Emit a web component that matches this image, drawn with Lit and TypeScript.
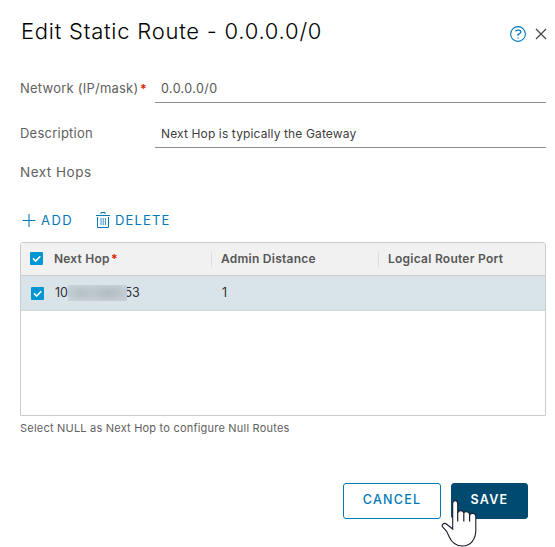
import { LitElement, html, css, svg } from "lit";
import { customElement } from "lit/decorators.js";

const tick = html`<svg class="tick" viewBox="0 0 13 13"><path d="M3 6.4 5.6 9 10.3 4.3" /></svg>`;

@customElement("app-root")
export class AppRoot extends LitElement {
  static styles = css`
    :host { display: block; position: relative; width: 555px; height: 547px; overflow: hidden; background: #fff; color: #616161; font: 13px/20px Inter, "Liberation Sans", sans-serif; white-space: nowrap; }
    svg { display: block; fill: none; flex: none; }
    .dialog { box-sizing: border-box; padding: 17px 9px 0 20px; }
    header { display: flex; align-items: center; height: 30px; color: #000; }
    h1 { margin: 0; flex: 1; font-size: 22px; line-height: 28px; padding: 0 0 2px 1px; font-weight: 350; letter-spacing: 0.76px; }
    .tools { display: flex; align-items: center; gap: 9px; padding-top: 3px; margin-right: -1px; }
    .help { stroke: #0079b8; }
    .close { stroke: #444; }
    .field { display: flex; height: 30px; }
    .net { margin-top: 26px; }
    .desc { margin-top: 15px; }
    .label { width: 135px; line-height: 31px; letter-spacing: 0.23px; }
    .star { color: #e12200; font-weight: 700; font-size: 12px; margin-left: 1.5px; }
    .input { flex: 1; box-sizing: border-box; border-bottom: 1px solid #8c8c8c; padding-left: 6px; line-height: 31px; font-size: 12px; letter-spacing: 0.13px; color: #404040; }
    .net .input { color: #565656; font-size: 12.5px; letter-spacing: 0.4px; }
    .section { margin-top: 14px; font-size: 13.5px; letter-spacing: 0.5px; }
    .actions { display: flex; height: 20px; margin-top: 28px; padding-left: 2px; color: #0079b8; letter-spacing: 1.15px; }
    .action { display: flex; align-items: center; }
    .add { width: 74px; gap: 5px; }
    .add span { letter-spacing: 1.5px; }
    .delete { gap: 5px; }
    .action svg { stroke: #0079b8; }
    .grid { box-sizing: border-box; height: 174px; margin-top: 12px; border: 1px solid #ccc; border-radius: 3px 3px 0 0; overflow: hidden; }
    .row { display: flex; align-items: center; height: 34px; background: #d9e4ea; border-bottom: 1px solid #cfd8dd; font-size: 12.5px; color: #313131; }
    .head { height: 32px; background: #f1f1f1; border-bottom: 1px solid #ccc; font-size: 12px; font-weight: 600; color: #565656; letter-spacing: 0.25px; }
    .c1, .c2, .c3 { display: flex; align-items: center; box-sizing: border-box; }
    .c1 { width: 190px; padding-left: 9px; }
    .c2 { width: 167px; padding-left: 9px; }
    .c3 { flex: 1; padding-left: 9px; }
    .head .c1 { letter-spacing: 0.2px; }
    .head .c2, .head .c3 { height: 15px; border-left: 1px solid #ddd; }
    .row:not(.head) .c1 { padding-left: 10px; }
    .row:not(.head) .c2 { padding-left: 11px; }
    .tick { width: 13px; height: 13px; background: #0095d3; border-radius: 1px; stroke: #fff; stroke-width: 1.6; margin: 0 11px 1px 0; }
    .row:not(.head) .tick { margin: 0 11px 0 0; }
    .mask { width: 59px; height: 16px; background: radial-gradient(ellipse 16px 9px at 13px 8px, #b5c0c7, transparent), radial-gradient(ellipse 26px 10px at 40px 8px, #b0bbc2, transparent), #c8d1d7; margin: 0 -3px 0 0.5px; z-index: 1; }
    .note { margin-top: 2px; font-size: 11px; letter-spacing: 0.21px; }
    .footer { display: flex; gap: 10px; margin: 45px 0 0 323px; }
    .btn { box-sizing: border-box; width: 98px; height: 36px; border: 1px solid #0079b8; border-radius: 3px; color: #0079b8; font: 550 12.5px/32px Inter, sans-serif; letter-spacing: 1.25px; text-align: center; padding: 0 0 2px; background: #fff; }
    .save { width: 77px; background: #004a70; border-color: #004a70; color: #fff; font-weight: 600; }
    .cursor { position: absolute; left: 441px; top: 499px; }
  `;

  render() {
    return html`
      <div class="dialog">
        <header>
          <h1>Edit Static Route - 0.0.0.0/0</h1>
          <div class="tools">
            <svg class="help" width="16" height="16" viewBox="0 0 16 16"><circle cx="8" cy="8" r="7.4" stroke-width="1.1" /><path d="M5.3 5.2Q6.5 4.2 8.3 4.2 10.7 4.2 10.7 6 10.7 7.6 8 8.3V9.9M8 11.4V12.6" stroke-width="1.2" /></svg>
            <svg class="close" width="12" height="12" viewBox="0 0 12 12"><path d="M1 1 11 11M11 1 1 11" stroke-width="1.2" /></svg>
          </div>
        </header>
        <div class="field net"><span class="label">Network (IP/mask)<span class="star">*</span></span><div class="input">0.0.0.0/0</div></div>
        <div class="field desc"><span class="label">Description</span><div class="input">Next Hop is typically the Gateway</div></div>
        <div class="section">Next Hops</div>
        <div class="actions">
          <div class="action add"><svg width="14" height="14" viewBox="0 0 14 14"><path d="M.5 7.5H13.5M7 1V14" stroke-width="1.1" /></svg><span>ADD</span></div>
          <div class="action delete"><svg width="14" height="17" viewBox="0 0 14 17"><path d="M0 3.5H14M5 2V.5H9V2M1.5 5V15.5H12.5V5" /><path d="M5 6V13M7.2 6V13M9.4 6V13" stroke-width=".8" /></svg><span>DELETE</span></div>
        </div>
        <div class="grid">
          <div class="row head">
            <div class="c1">${tick}<span>Next Hop</span><span class="star">*</span></div>
            <div class="c2"><span>Admin Distance</span></div>
            <div class="c3"><span>Logical Router Port</span></div>
          </div>
          <div class="row">
            <div class="c1">${tick}<span>10</span><div class="mask"></div><span>53</span></div>
            <div class="c2"><span>1</span></div>
            <div class="c3"></div>
          </div>
        </div>
        <div class="note">Select NULL as Next Hop to configure Null Routes</div>
        <div class="footer"><button class="btn">CANCEL</button><button class="btn save">SAVE</button></div>
      </div>
      <svg class="cursor" width="36" height="48" viewBox="0 0 36 48">
        ${svg`<path d="M11.7 30V4.5C11.7 .7 16.7 .7 16.7 4.5V14C17 11 22.6 10.8 22.8 14.5 23.3 12 28.4 12 28.6 16 30 13.5 34.8 14 34.8 17.5V31C34.8 40 30 47 21.5 47 14.5 47 11 44 8.3 38L5.5 32 2 28.5C-.5 25.5 3.3 23 6 25.5Z" fill="#fff" stroke="#1d1b2e" stroke-width="1.1"/><path d="M16.7 13V22.5M22.8 14.5V22.5M28.6 16V22.5" stroke="#1d1b2e" stroke-width="1.2"/>`}
      </svg>
    `;
  }
}
